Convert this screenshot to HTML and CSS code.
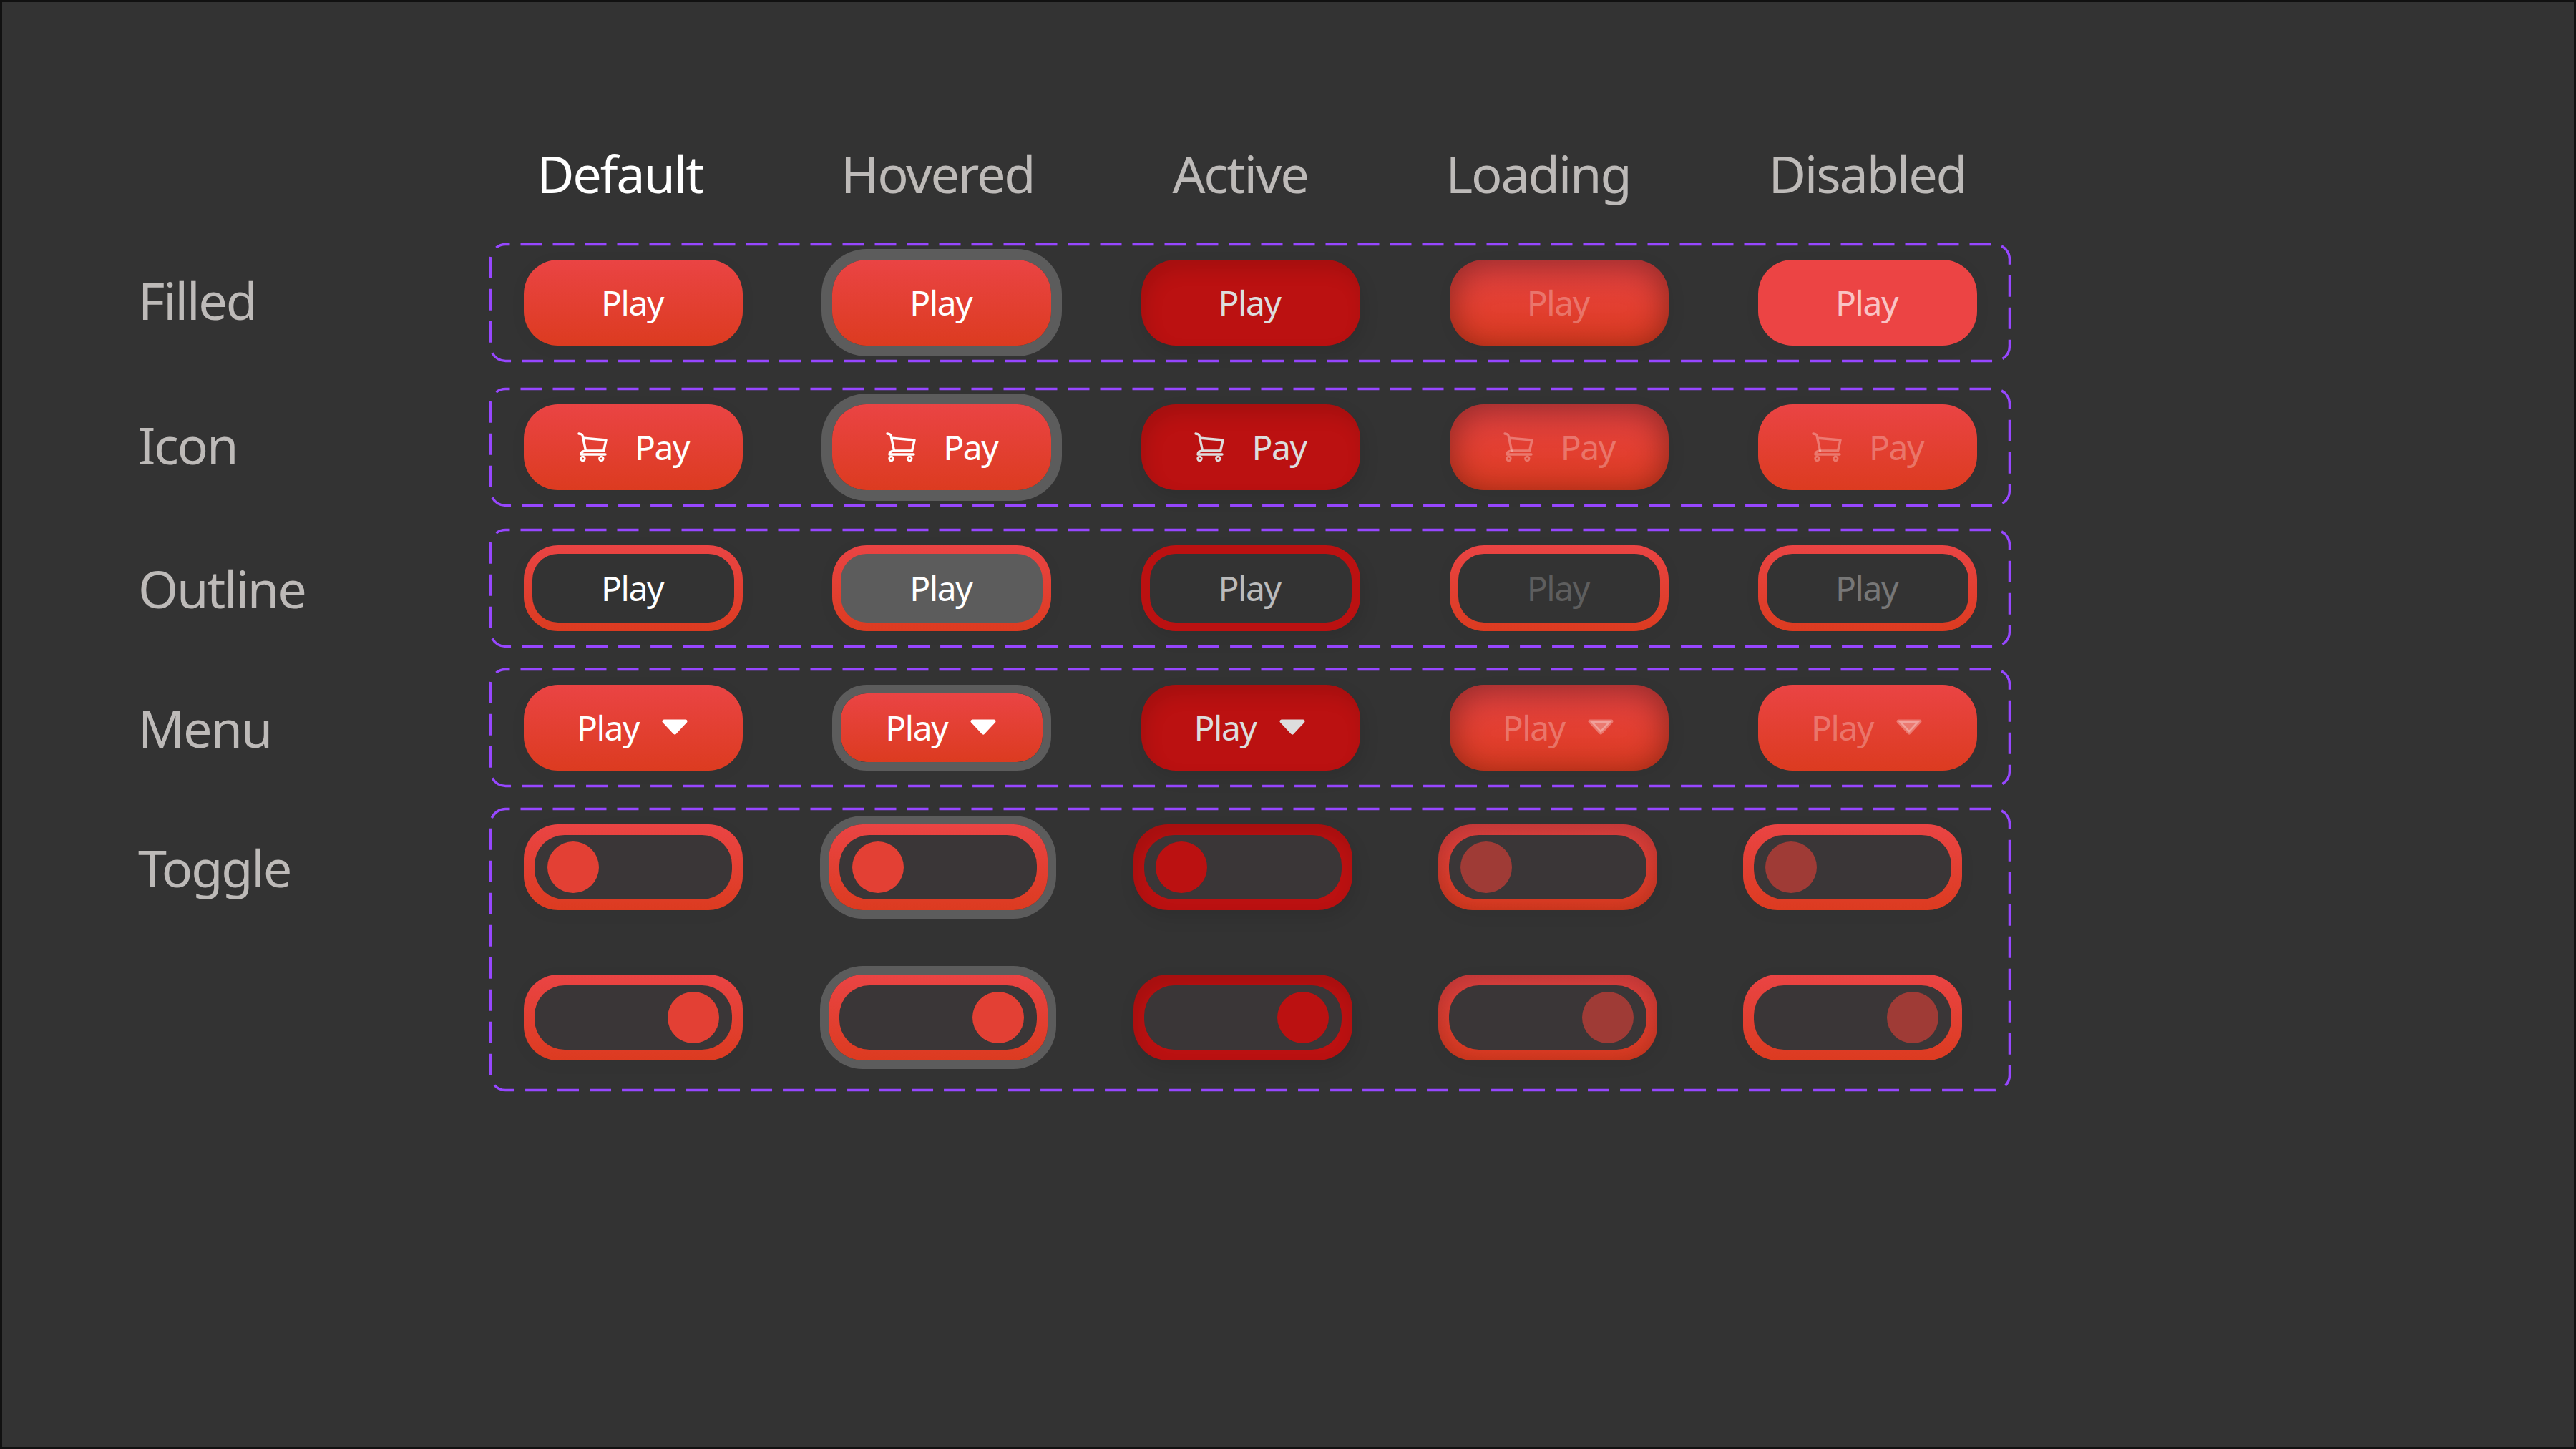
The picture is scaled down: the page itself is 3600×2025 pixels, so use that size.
FILE: index.html
```html
<!DOCTYPE html>
<html lang="en">
<head>
    <meta charset="UTF-8">
    <title>Button states</title>
    <link rel="stylesheet" href="styles.css">
</head>
<body>
<svg class="defs" width="0" height="0">
    <symbol id="cart" viewBox="0 0 42 42">
        <path d="M2 2 L5 2.6 Q6.6 3 7 4.6 L11.6 26 L36.6 26 L40 11 L9 8.2" fill="none" stroke="currentColor" stroke-width="3.4" stroke-linecap="round" stroke-linejoin="round"/>
        <path d="M11.6 26 Q5 26.5 5 31 L39 31" fill="none" stroke="currentColor" stroke-width="3.4" stroke-linecap="round" stroke-linejoin="round"/>
        <circle cx="7.5" cy="37" r="2.9" fill="none" stroke="currentColor" stroke-width="2.6"/>
        <circle cx="33.3" cy="37" r="2.9" fill="none" stroke="currentColor" stroke-width="2.6"/>
    </symbol>
    <symbol id="caret" viewBox="0 0 36 22">
        <path d="M3 3 L33 3 L18 19 Z" fill="currentColor" stroke="currentColor" stroke-width="5" stroke-linejoin="round"/>
    </symbol>
</svg>

<main class="sheet">
    <div class="states">
        <span class="state state-on">Default</span>
        <span class="state">Hovered</span>
        <span class="state">Active</span>
        <span class="state">Loading</span>
        <span class="state">Disabled</span>
    </div>

    <!-- Filled -->
    <section class="row row-filled">
        <h2 class="row-name">Filled</h2>
        <div class="panel">
            <svg class="dash"><rect/></svg>
            <button class="btn">Play</button>
            <button class="btn is-hover">Play</button>
            <button class="btn is-active">Play</button>
            <button class="btn is-loading">Play</button>
            <button class="btn is-disabled is-flat">Play</button>
        </div>
    </section>

    <!-- Icon -->
    <section class="row row-icon">
        <h2 class="row-name">Icon</h2>
        <div class="panel">
            <svg class="dash"><rect/></svg>
            <button class="btn has-icon"><svg class="cart"><use href="#cart"/></svg>Pay</button>
            <button class="btn has-icon is-hover"><svg class="cart"><use href="#cart"/></svg>Pay</button>
            <button class="btn has-icon is-active"><svg class="cart"><use href="#cart"/></svg>Pay</button>
            <button class="btn has-icon is-loading"><svg class="cart"><use href="#cart"/></svg>Pay</button>
            <button class="btn has-icon is-disabled"><svg class="cart"><use href="#cart"/></svg>Pay</button>
        </div>
    </section>

    <!-- Outline -->
    <section class="row row-outline">
        <h2 class="row-name">Outline</h2>
        <div class="panel">
            <svg class="dash"><rect/></svg>
            <button class="btn outline">Play</button>
            <button class="btn outline is-hover">Play</button>
            <button class="btn outline is-active">Play</button>
            <button class="btn outline is-loading">Play</button>
            <button class="btn outline is-disabled">Play</button>
        </div>
    </section>

    <!-- Menu -->
    <section class="row row-menu">
        <h2 class="row-name">Menu</h2>
        <div class="panel">
            <svg class="dash"><rect/></svg>
            <button class="btn menu">Play<svg class="caret"><use href="#caret"/></svg></button>
            <button class="btn menu is-hover">Play<svg class="caret"><use href="#caret"/></svg></button>
            <button class="btn menu is-active">Play<svg class="caret"><use href="#caret"/></svg></button>
            <button class="btn menu is-loading">Play<svg class="caret"><use href="#caret"/></svg></button>
            <button class="btn menu is-disabled">Play<svg class="caret"><use href="#caret"/></svg></button>
        </div>
    </section>

    <!-- Toggle -->
    <section class="row">
        <h2 class="row-name">Toggle</h2>
        <div class="panel panel-toggles">
            <svg class="dash"><rect/></svg>
            <div class="toggle"><div class="track"><span class="knob"></span></div></div>
            <div class="toggle is-hover"><div class="track"><span class="knob"></span></div></div>
            <div class="toggle is-active"><div class="track"><span class="knob"></span></div></div>
            <div class="toggle is-loading"><div class="track"><span class="knob"></span></div></div>
            <div class="toggle is-disabled"><div class="track"><span class="knob"></span></div></div>

            <div class="toggle is-on"><div class="track"><span class="knob"></span></div></div>
            <div class="toggle is-on is-hover"><div class="track"><span class="knob"></span></div></div>
            <div class="toggle is-on is-active"><div class="track"><span class="knob"></span></div></div>
            <div class="toggle is-on is-loading"><div class="track"><span class="knob"></span></div></div>
            <div class="toggle is-on is-disabled"><div class="track"><span class="knob"></span></div></div>
        </div>
    </section>
</main>
</body>
</html>
```

FILE: styles.css
```css
* {
    box-sizing: border-box;
}

body {
    margin: 0;
    background: #333333;
    font-family: "Noto Sans", sans-serif;
}

.defs {
    position: absolute;
}

.sheet {
    height: 2025px;
    padding: 190px 0 0 190px;
    border: 3px solid #111111;
}

/* column titles */
.states {
    display: flex;
    gap: 193px;
    margin: 0 0 49px 557px;
    font-size: 72px;
    letter-spacing: -2.2px;
    line-height: 98px;
    color: #bdbab8;
}

.state-on {
    color: #ffffff;
}

/* rows */
.row {
    display: flex;
    margin-bottom: 29px;
}

.row-filled {
    margin-bottom: 36px;
}

.row-icon {
    margin-bottom: 31px;
}

.row-name {
    width: 491px;
    margin: 0;
    font-size: 72px;
    font-weight: 400;
    letter-spacing: -2.2px;
    line-height: 166px;
    color: #bdbab8;
}

.row-filled .row-name,
.row-icon .row-name {
    line-height: 158px;
}

.panel {
    position: relative;
    display: flex;
    justify-content: space-between;
    width: 2126px;
    height: 166px;
    padding: 23px 47px 23px 48px;
}

.panel-toggles {
    flex-wrap: wrap;
    align-content: flex-start;
    justify-content: flex-start;
    gap: 90px 120px;
    height: 396px;
}

.dash {
    position: absolute;
    top: 0;
    left: 0;
    width: 100%;
    height: 100%;
    overflow: visible;
}

.dash rect {
    x: 1.5px;
    y: 1.5px;
    width: calc(100% - 3px);
    height: calc(100% - 3px);
    rx: 21px;
    fill: none;
    stroke: #9747ff;
    stroke-width: 3.5px;
    stroke-dasharray: 30 15;
    stroke-dashoffset: 24;
}

/* buttons */
.btn {
    position: relative;
    display: flex;
    align-items: center;
    justify-content: center;
    width: 306px;
    height: 120px;
    padding: 0 3px 0 0;
    border: 0;
    border-radius: 48px;
    background: linear-gradient(180deg, #ea4444, #dc3b20);
    box-shadow: 0 4px 24px rgba(0, 0, 0, 0.04);
    color: #ffffff;
    font-family: inherit;
    font-size: 48px;
    letter-spacing: -1.4px;
    line-height: 1;
}

.has-icon {
    gap: 38px;
    padding: 0;
}

.cart {
    width: 42px;
    height: 42px;
}

.menu {
    gap: 32px;
}

.caret {
    width: 36px;
    height: 22px;
    margin-top: -3px;
}

.btn.is-hover {
    box-shadow: 0 0 0 15px #5c5c5c;
}

.btn.is-active {
    background: #bb1111;
    box-shadow: inset 6px 14px 26px rgba(0, 0, 0, 0.12), 4px 10px 24px rgba(0, 0, 0, 0.1);
    color: #dddddd;
}

.btn.is-loading {
    box-shadow: inset 0 8px 48px rgba(0, 0, 0, 0.4), 4px 6px 24px rgba(0, 0, 0, 0.06);
    color: rgba(255, 255, 255, 0.3);
}

.btn.is-disabled {
    color: rgba(255, 255, 255, 0.3);
}

.btn.is-flat {
    background: #ec4444;
    color: rgba(255, 255, 255, 0.7);
}

.outline,
.outline.is-loading,
.outline.is-disabled {
    border: 12px solid transparent;
    background: linear-gradient(#333333, #333333) padding-box,
                linear-gradient(180deg, #ea4444, #dc3b20) border-box;
    box-shadow: 0 4px 24px rgba(0, 0, 0, 0.04);
}

.outline.is-hover {
    background: linear-gradient(#5c5c5c, #5c5c5c) padding-box,
                linear-gradient(180deg, #ea4444, #dc3b20) border-box;
    box-shadow: 0 4px 24px rgba(0, 0, 0, 0.04);
}

.outline.is-active {
    background: linear-gradient(#333333, #333333) padding-box,
                linear-gradient(#bb1111, #bb1111) border-box;
    box-shadow: 4px 10px 24px rgba(0, 0, 0, 0.1);
    color: #bbbbbb;
}

.outline.is-loading {
    color: #5e5e5e;
}

.outline.is-disabled {
    color: #777777;
}

.menu.is-hover {
    border: 12px solid #5c5c5c;
    background: linear-gradient(180deg, #ea4444, #dc3b20) padding-box;
    box-shadow: none;
}

/* toggles */
.toggle {
    width: 306px;
    height: 120px;
    padding: 15px;
    border-radius: 48px;
    background: linear-gradient(180deg, #ea4444, #dc3b20);
    box-shadow: 0 4px 24px rgba(0, 0, 0, 0.04);
}

.track {
    display: flex;
    align-items: center;
    height: 90px;
    padding: 0 18px;
    border-radius: 42px;
    background: #3a3637;
}

.knob {
    width: 72px;
    height: 72px;
    border-radius: 50%;
    background: #e34034;
}

.is-on .track {
    justify-content: flex-end;
}

.is-active .track,
.is-loading .track,
.is-disabled .track {
    padding-left: 16px;
}

.toggle.is-hover {
    box-shadow: 0 0 0 12px #5c5c5c;
}

.toggle.is-active {
    background: #bb1111;
    box-shadow: inset 6px 14px 26px rgba(0, 0, 0, 0.12), 4px 10px 24px rgba(0, 0, 0, 0.1);
}

.toggle.is-active .knob {
    background: #bb1111;
}

.toggle.is-loading {
    box-shadow: inset 0 8px 40px rgba(0, 0, 0, 0.25), 4px 6px 24px rgba(0, 0, 0, 0.06);
}

.toggle.is-loading .knob,
.toggle.is-disabled .knob {
    background: #9f3b36;
}
```
